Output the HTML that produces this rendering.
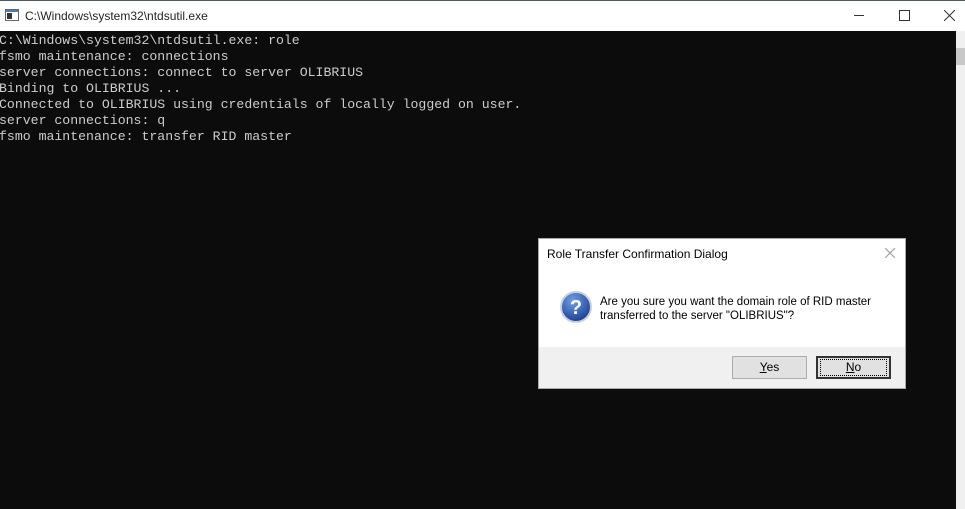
<!DOCTYPE html>
<html><head><style>
body{margin:0;width:965px;height:509px;overflow:hidden;background:#0c0c0c;position:relative;font-family:"Liberation Sans",sans-serif}
#top{position:absolute;left:0;top:0;width:965px;height:1px;background:#4a5a55}
#title{position:absolute;left:0;top:1px;width:965px;height:30px;background:#fff}
#title .t{position:absolute;left:25px;top:8px;font-size:12px;color:#222}
#con{position:absolute;left:-1px;top:33px;font-family:"Liberation Mono",monospace;font-size:13.2px;line-height:16px;color:#cccccc;white-space:pre}
#sb{position:absolute;left:956px;top:31px;width:9px;height:478px;background:#f0f0f0}
#dlg{position:absolute;left:538px;top:238px;width:366px;height:149px;background:#fff;border:1px solid #aaa}
#foot{position:absolute;left:0;top:108px;width:366px;height:41px;background:#f0f0f0}
.btn{position:absolute;top:117px;width:73px;height:21px;background:#e1e1e1;border:1px solid #adadad;font-size:12px;text-align:center;line-height:21px;color:#000}
</style></head><body>
<div id="top"></div>
<div id="title">
<svg style="position:absolute;left:5px;top:8px" width="14" height="12"><rect x="0.5" y="0.5" width="13" height="11" fill="#fff" stroke="#666"/><rect x="1" y="1" width="12" height="2" fill="#4a7bb5"/><rect x="2" y="4" width="5" height="6" fill="#333"/></svg>
<div class="t">C:\Windows\system32\ntdsutil.exe</div>
<div style="position:absolute;left:854px;top:14px;width:10px;height:1px;background:#333"></div>
<div style="position:absolute;left:899px;top:9px;width:9px;height:9px;border:1px solid #333"></div>
<svg style="position:absolute;left:944px;top:9px" width="11" height="11"><path d="M0 0L11 11M11 0L0 11" stroke="#333" stroke-width="1"/></svg>
</div>
<div id="con">C:\Windows\system32\ntdsutil.exe: role
fsmo maintenance: connections
server connections: connect to server OLIBRIUS
Binding to OLIBRIUS ...
Connected to OLIBRIUS using credentials of locally logged on user.
server connections: q
fsmo maintenance: transfer RID master</div>
<div id="sb"><div style="position:absolute;left:0;top:17px;width:9px;height:17px;background:#c8c8c8"></div></div>
<div id="dlg">
<div style="position:absolute;left:8px;top:8px;font-size:12px;color:#000">Role Transfer Confirmation Dialog</div>
<svg style="position:absolute;left:346px;top:9px" width="10" height="10"><path d="M0 0L10 10M10 0L0 10" stroke="#999"/></svg>
<svg style="position:absolute;left:21px;top:52px" width="32" height="32"><defs><radialGradient id="g" cx="40%" cy="30%" r="70%"><stop offset="0" stop-color="#6fa0e0"/><stop offset="1" stop-color="#1d3f98"/></radialGradient></defs><circle cx="16" cy="16" r="15" fill="url(#g)" stroke="#c8d0dc" stroke-width="2"/><text x="16" y="23" font-family="Liberation Sans" font-weight="bold" font-size="20" fill="#fff" text-anchor="middle">?</text></svg>
<div style="position:absolute;left:61px;top:56px;font-size:11.5px;line-height:14px;color:#000">Are you sure you want the domain role of RID master<br>transferred to the server "OLIBRIUS"?</div>
<div id="foot">
<div class="btn" style="left:193px;top:9px"><u>Y</u>es</div>
<div class="btn" style="left:277px;top:9px;border:1px solid #333;box-shadow:inset 0 0 0 1px #333"><span style="border:1px dotted #000;display:inline-block;width:65px;line-height:15px;margin-top:2px"><u>N</u>o</span></div>
</div>
</div>
</body></html>
